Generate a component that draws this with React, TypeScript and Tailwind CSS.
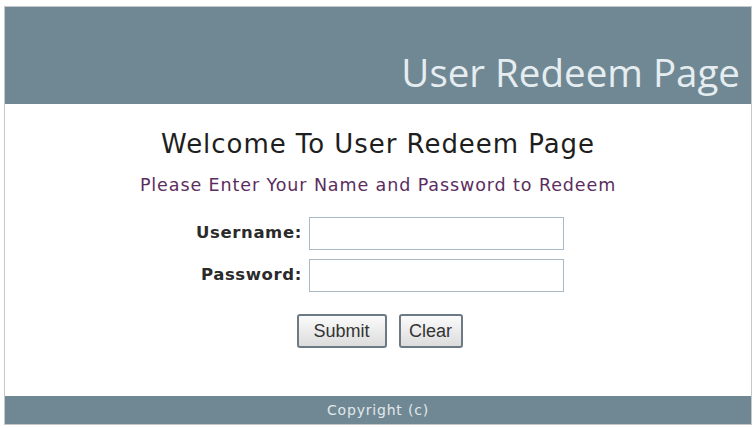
import { useState } from 'react'

// Redeem login page: banner, welcome text, credentials form and footer strip
export default function App() {
  const [username, setUsername] = useState('')
  const [password, setPassword] = useState('')

  const clear = () => {
    setUsername('')
    setPassword('')
  }

  return (
    <div className="w-[756px] h-[428px] bg-white pt-[6px] pl-[4px]">
      <div className="w-[748px] h-[419px] flex flex-col border border-[#c4c8ca] bg-white">
        {/* banner */}
        <header className="h-[97px] bg-[#6f8894] flex items-end justify-end pr-[11px] pb-[13px]">
          <h1 className="text-[38.5px] leading-none text-[#e6edf0] font-['Open_Sans',sans-serif]">
            User Redeem Page
          </h1>
        </header>

        <main className="flex-1 flex flex-col items-center font-['DejaVu_Sans',Verdana,sans-serif]">
          <h2 className="mt-[25px] text-[26px] leading-[30px] tracking-[0.95px] text-[#1e1e1e]">
            Welcome To User Redeem Page
          </h2>
          <p className="mt-[15px] text-[17.5px] leading-[22px] tracking-[0.9px] text-[#5b2d5e]">
            Please Enter Your Name and Password to Redeem
          </p>

          <form
            className="mt-[21px] ml-[4px] grid grid-cols-[auto_255px] gap-x-[7px] gap-y-[9px] items-center"
            onSubmit={(e) => e.preventDefault()}
          >
            <label className="text-right font-bold text-[16.5px] tracking-[0.6px] text-[#2a2a2a]">Username:</label>
            <input
              value={username}
              onChange={(e) => setUsername(e.target.value)}
              className="h-[33px] border border-[#a9bac6] bg-white px-1 outline-none"
            />
            <label className="text-right font-bold text-[16.5px] tracking-[0.6px] text-[#2a2a2a]">Password:</label>
            <input
              type="password"
              value={password}
              onChange={(e) => setPassword(e.target.value)}
              className="h-[33px] border border-[#a9bac6] bg-white px-1 outline-none"
            />
          </form>

          <div className="mt-[22px] ml-[3px] flex gap-[12px] font-['Liberation_Sans',Arial,sans-serif]">
            <button className="h-[34px] w-[90px] rounded-[3px] border-2 border-[#6c7a86] bg-gradient-to-b from-[#fbfbfb] to-[#dcdcdc] text-[18px] text-[#333]">
              Submit
            </button>
            <button
              onClick={clear}
              className="h-[34px] w-[64px] rounded-[3px] border-2 border-[#6c7a86] bg-gradient-to-b from-[#fbfbfb] to-[#dcdcdc] text-[18px] text-[#333]"
            >
              Clear
            </button>
          </div>
        </main>

        {/* footer strip */}
        <footer className="h-[28px] bg-[#6f8894] flex items-center justify-center">
          <span className="text-[14px] tracking-[0.8px] text-[#e2e8ea] font-['DejaVu_Sans',Verdana,sans-serif]">
            Copyright (c)
          </span>
        </footer>
      </div>
    </div>
  )
}
